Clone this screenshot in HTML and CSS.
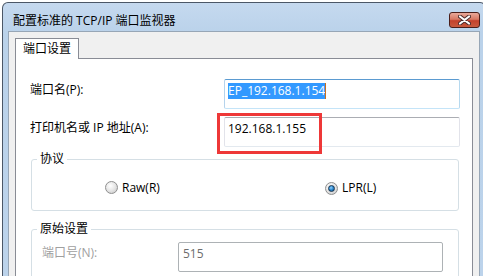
FILE: index.html
```html
<!DOCTYPE html>
<html lang="zh-CN">
<head>
  <meta charset="UTF-8">
  <title>配置标准的 TCP/IP 端口监视器</title>
  <link rel="stylesheet" href="styles.css">
</head>
<body>
  <!-- Dialog window -->
  <div class="window">
    <div class="titlebar">
      <span class="title">配置标准的 TCP/IP 端口监视器</span>
      <button class="close" title="关闭">
        <svg width="13" height="10" viewBox="0 0 13 10">
          <path d="M2 1.5 L11 8.5 M11 1.5 L2 8.5" stroke="#4a2a2a" stroke-width="4" stroke-linecap="round"/>
          <path d="M2 1.5 L11 8.5 M11 1.5 L2 8.5" stroke="#ffffff" stroke-width="2.2" stroke-linecap="round"/>
        </svg>
      </button>
    </div>

    <div class="client">
      <!-- Tabs -->
      <div class="tabs">
        <div class="tab">端口设置</div>
      </div>

      <div class="page">
        <div class="row">
          <label>端口名(P):</label>
          <div class="field focus"><span class="sel">EP_192.168.1.154</span><span class="caret"></span></div>
        </div>

        <div class="row marked">
          <label>打印机名或 IP 地址(A):</label>
          <div class="field">192.168.1.155</div>
          <div class="mark"></div>
        </div>

        <!-- Protocol -->
        <fieldset class="group">
          <legend>协议</legend>
          <div class="radios">
            <div class="radio"><span class="dot"></span>Raw(R)</div>
            <div class="radio lpr"><span class="dot checked"></span>LPR(L)</div>
          </div>
        </fieldset>

        <!-- Raw settings -->
        <fieldset class="group raw">
          <legend>原始设置</legend>
          <div class="row sub">
            <label class="dim">端口号(N):</label>
            <div class="field disabled">515</div>
          </div>
        </fieldset>
      </div>
    </div>
  </div>
</body>
</html>
```

FILE: styles.css
```css
body {
  margin: 0;
  background-color: #ffffff;
  font-family: "Open Sans", "Noto Sans CJK SC", sans-serif;
  font-size: 12px;
  color: #000000;
  overflow: hidden;
}

/* Window frame */
.window {
  width: 472px;
  height: 273px;
  margin: 2px 0 0 2px;
  border: 1px solid #4b5767;
  border-bottom: none;
  border-radius: 6px 6px 0 0;
  padding: 0 5px;
  background: linear-gradient(to bottom, #c5d9ef 0px, #bad2ea 30px, #bcd3eb 100%);
}

.titlebar {
  display: flex;
  align-items: flex-start;
  height: 28px;
  padding: 9px 0 0 5px;
  box-sizing: border-box;
}

.title {
  line-height: 17px;
}

.close {
  margin-left: auto;
  width: 31px;
  height: 16px;
  padding: 0;
  border: 1px solid #4a1e1a;
  border-radius: 3px;
  background: linear-gradient(to bottom, #e9a99a 0%, #d77863 45%, #c4412b 55%, #c85a3e 100%);
  display: flex;
  align-items: center;
  justify-content: center;
}

/* Client area */
.client {
  height: 245px;
  box-sizing: border-box;
  background-color: #f0f0f0;
  border: 1px solid #97a6b6;
  border-bottom: none;
  padding: 6px 6px 0 6px;
}

.tabs {
  display: flex;
}

.tab {
  position: relative;
  z-index: 1;
  width: 62px;
  height: 20px;
  margin-bottom: -1px;
  border: 1px solid #898c95;
  border-bottom: none;
  background-color: #ffffff;
  line-height: 20px;
  text-align: center;
}

.page {
  height: 219px;
  box-sizing: border-box;
  overflow: hidden;
  border: 1px solid #898c95;
  border-bottom: none;
  background-color: #ffffff;
  padding-top: 20px;
}

/* Form rows */
.row {
  display: grid;
  grid-template-columns: 194px 236px;
  padding-left: 14px;
  margin-bottom: 8px;
}

.row label {
  padding-top: 3px;
  line-height: 16px;
}

.field {
  height: 30px;
  box-sizing: border-box;
  border: 1px solid;
  border-color: #abadb3 #e2e3ea #e3e9ef #e2e3ea;
  border-radius: 2px;
  padding: 3px 3px 0 3px;
  line-height: 16px;
  display: flex;
  align-items: flex-start;
}

.field.focus {
  border-color: #5b9bd1 #b6d9ef #c4e4f8 #b5d3ec;
}

.sel {
  background-color: #3399ff;
  color: #ffffff;
}

.caret {
  width: 0;
  height: 16px;
  border-left: 1px solid #c8701e;
}

.marked {
  position: relative;
}

.mark {
  position: absolute;
  left: 201px;
  top: -4px;
  width: 105px;
  height: 41px;
  box-sizing: border-box;
  border: 3px solid #ee3838;
}

/* Group boxes */
.group {
  margin: -4px 13px 0 15px;
  padding: 0;
  border: 1px solid #d5dfe5;
  border-radius: 3px;
}

.group legend {
  margin-left: 5px;
  padding: 0 3px;
  line-height: 16px;
}

.radios {
  display: flex;
  padding: 12px 0 14px 73px;
}

.radio {
  display: flex;
  align-items: center;
  gap: 4px;
  line-height: 16px;
}

.radio:first-child {
  width: 220px;
}

.radio.lpr {
  margin-top: 1px;
}

.dot {
  width: 11px;
  height: 11px;
  border: 1px solid #8f8f8f;
  border-radius: 50%;
  background: radial-gradient(circle at 40% 35%, #ffffff 0%, #e8e8e8 45%, #c4c4c4 100%);
  display: flex;
  align-items: center;
  justify-content: center;
}

.dot.checked::after {
  content: "";
  width: 5px;
  height: 5px;
  border-radius: 50%;
  border: 1px solid #16344f;
  background: radial-gradient(circle at 40% 35%, #8fd0ff 0%, #2a86cc 50%, #0f4a80 100%);
}

.group.raw {
  margin-top: 10px;
}

.row.sub {
  grid-template-columns: 136px 265px;
  padding: 5px 0 0 10px;
}

.dim {
  color: #a0a0a0;
}

.field.disabled {
  border-color: #adb2b5;
  color: #6d6d6d;
  padding-left: 4px;
}
```
